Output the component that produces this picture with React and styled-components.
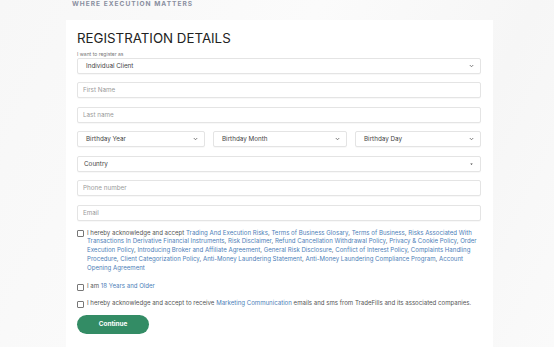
import React from "react";
import styled, { createGlobalStyle } from "styled-components";

const Global = createGlobalStyle`
  html, body { margin: 0; padding: 0; }
  body {
    width: 554px; height: 347px; overflow: hidden;
    font-family: Inter, "Liberation Sans", sans-serif;
    background: linear-gradient(115deg, #f7f7f7 0%, #fbfbfb 45%, #f6f6f6 75%, #fafafa 100%);
  }
`;

const Page = styled.div`
  width: 554px;
  height: 347px;
  position: relative;
  overflow: hidden;
`;

const Tagline = styled.div`
  padding-left: 72px;
  height: 10px;
  font-size: 6.6px;
  font-weight: 700;
  letter-spacing: 1px;
  color: #8a8fa0;
  line-height: 9px;
`;

const Card = styled.div`
  margin: 10px 0 0 66px;
  width: 427px;
  height: 340px;
  background: #fff;
  padding: 10px 12px 0 11px;
  box-sizing: border-box;
`;

const Title = styled.h1`
  margin: 0;
  font-size: 13.3px;
  font-weight: 400;
  color: #222;
  line-height: 17px;
`;

const Label = styled.div`
  font-size: 5px;
  color: #777;
  line-height: 6px;
  margin-top: 3.5px;
`;

const Form = styled.div`
  display: flex;
  flex-direction: column;
  gap: 8.5px;
  margin-top: 1px;
`;

const fieldBase = `
  box-sizing: border-box;
  height: 16px;
  border: 1px solid #e4e4e4;
  border-radius: 2px;
  background: #fff;
  box-shadow: 0 1px 1px rgba(0,0,0,0.03);
  font-family: Inter, "Liberation Sans", sans-serif;
  font-size: 6.3px;
  color: #444;
  width: 100%;
  outline: none;
`;

const Input = styled.input`
  ${fieldBase}
  padding: 0 5px;
  &::placeholder { color: #9a9a9a; }
`;

const SelectBox = styled.div`
  ${fieldBase}
  padding: 0 6px 0 ${(p) => (p.$pl ? p.$pl : 7)}px;
  display: flex;
  align-items: center;
  justify-content: space-between;
`;

const Arrow = styled.svg`
  width: 5px;
  height: 4px;
  flex: none;
`;

const Row3 = styled.div`
  display: grid;
  grid-template-columns: 128px 134px 126px;
  gap: 8px;
`;

const Checks = styled.div`
  display: flex;
  flex-direction: column;
  margin-top: 8px;
`;

const CheckRow = styled.label`
  display: flex;
  align-items: flex-start;
  gap: 3px;
  font-size: 6.1px;
  line-height: 8.9px;
  color: #555;
  margin-bottom: ${(p) => p.$mb || 0}px;
`;

const Box = styled.span`
  flex: none;
  width: 5px;
  height: 5px;
  border: 0.8px solid #777;
  border-radius: 1px;
  margin-top: 1.6px;
`;

const Text = styled.span`
  width: 390px;
`;

const Link = styled.a`
  color: #4d80b8;
  text-decoration: none;
`;

const Button = styled.button`
  margin-top: 7px;
  width: 72px;
  height: 19px;
  border: none;
  border-radius: 10px;
  background: #338c65;
  color: #fff;
  font-family: Inter, "Liberation Sans", sans-serif;
  font-weight: 700;
  font-size: 6.4px;
  padding: 0;
`;

const Chevron = () => (
  <Arrow viewBox="0 0 10 8">
    <path d="M1.5 2 L5 5.5 L8.5 2" fill="none" stroke="#555" strokeWidth="1.5" />
  </Arrow>
);

const Caret = () => (
  <Arrow viewBox="0 0 10 8">
    <path d="M2.5 3 L7.5 3 L5 6 Z" fill="#444" />
  </Arrow>
);

const links1 = [
  "Trading And Execution Risks",
  "Terms of Business Glosary",
  "Terms of Business",
  "Risks Associated With Transactions In Derivative Financial Instruments",
  "Risk Disclaimer",
  "Refund Cancellation Withdrawal Policy",
  "Privacy & Cookie Policy",
  "Order Execution Policy",
  "Introducing Broker and Affiliate Agreement",
  "General Risk Disclosure",
  "Conflict of Interest Policy",
  "Complaints Handling Procedure",
  "Client Categorization Policy",
  "Anti-Money Laundering Statement",
  "Anti-Money Laundering Compliance Program",
  "Account Opening Agreement",
];

export default function App() {
  return (
    <Page>
      <Global />
      <Tagline>WHERE EXECUTION MATTERS</Tagline>
      <Card>
        <Title>REGISTRATION DETAILS</Title>
        <Label>I want to register as</Label>
        <Form>
          <SelectBox $pl={8}>
            <span>Individual Client</span>
            <Chevron />
          </SelectBox>
          <Input placeholder="First Name" />
          <Input placeholder="Last name" />
          <Row3>
            <SelectBox $pl={8}><span>Birthday Year</span><Chevron /></SelectBox>
            <SelectBox $pl={8}><span>Birthday Month</span><Chevron /></SelectBox>
            <SelectBox $pl={8}><span>Birthday Day</span><Chevron /></SelectBox>
          </Row3>
          <SelectBox $pl={6}><span>Country</span><Caret /></SelectBox>
          <Input placeholder="Phone number" />
          <Input placeholder="Email" />
        </Form>
        <Checks>
          <CheckRow $mb={9}>
            <Box />
            <Text>
              I hereby acknowledge and accept{" "}
              {links1.map((l, i) => (
                <React.Fragment key={l}>
                  <Link>{l}</Link>
                  {i < links1.length - 1 ? ", " : ""}
                </React.Fragment>
              ))}
            </Text>
          </CheckRow>
          <CheckRow $mb={8}>
            <Box />
            <Text>
              I am <Link>18 Years and Older</Link>
            </Text>
          </CheckRow>
          <CheckRow>
            <Box />
            <Text>
              I hereby acknowledge and accept to receive <Link>Marketing Communication</Link> emails and sms from TradeFills and its associated companies.
            </Text>
          </CheckRow>
        </Checks>
        <Button>Continue</Button>
      </Card>
    </Page>
  );
}
